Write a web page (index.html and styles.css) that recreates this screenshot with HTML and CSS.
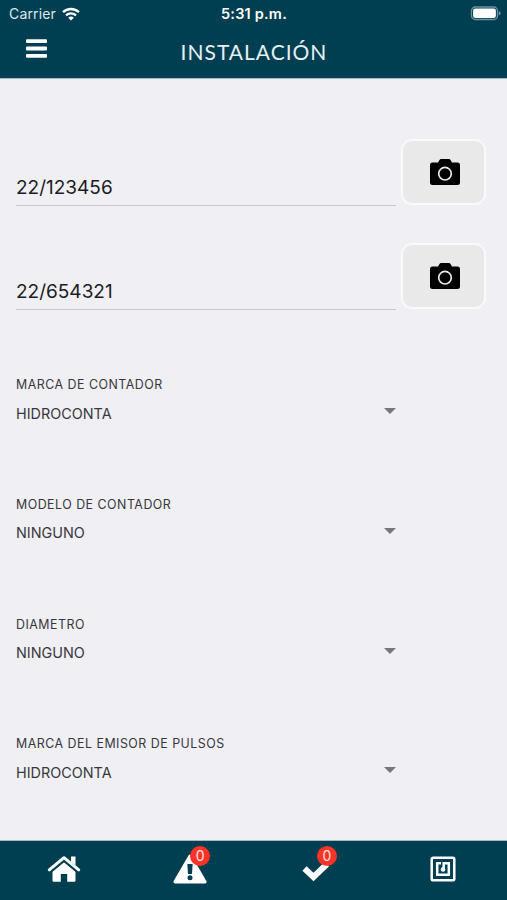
FILE: index.html
```html
<!DOCTYPE html>
<html lang="es">

<head>
    <meta charset="UTF-8">
    <meta name="viewport" content="width=device-width, initial-scale=1.0">
    <title>Instalación</title>
    <link rel="stylesheet" href="styles.css">
</head>

<body>

    <!-- Header -->
    <header class="header">
        <div class="status-bar">
            <div class="carrier">
                <span class="carrier-name">Carrier</span>
                <svg class="wifi" width="18" height="14" viewBox="0 0 18 14" fill="none" stroke="#fff" stroke-width="2.3">
                    <path d="M1 5.2a11.6 11.6 0 0 1 16 0" />
                    <path d="M4 8.3a7.2 7.2 0 0 1 10 0" />
                    <path d="M9 13.6L6.2 10.8a4 4 0 0 1 5.6 0z" fill="#fff" stroke="none" />
                </svg>
            </div>
            <span class="time">5:31 p.m.</span>
            <svg class="battery" width="31" height="15" viewBox="0 0 31 15">
                <rect x="1.5" y="1" width="26" height="12.5" rx="3.8" fill="none" stroke="#6d929f" stroke-width="1.3" />
                <rect x="3.1" y="2.6" width="22.8" height="9.3" rx="2.2" fill="#fff" />
                <path d="M28.8 5.2q2 .6 2 2.1t-2 2.1z" fill="#6d929f" />
            </svg>
        </div>
        <div class="title-bar">
            <button class="menu-btn" aria-label="Menú">
                <svg width="21" height="20" viewBox="0 0 21 20" fill="#fff">
                    <rect y="0.3" width="21" height="3.8" rx="1" />
                    <rect y="7.6" width="21" height="3.8" rx="1" />
                    <rect y="14.9" width="21" height="3.8" rx="1" />
                </svg>
            </button>
            <h1>INSTALACIÓN</h1>
        </div>
    </header>

    <!-- Form -->
    <main class="content">
        <div class="photo-row">
            <div class="text-input">22/123456</div>
            <button class="photo-btn" aria-label="Foto">
                <svg width="30" height="26" viewBox="0 0 30 26">
                    <path d="M2.5 3.6H8L9.5 1Q10 0 11 0h8q1 0 1.5 1L22 3.6h5.5Q30 3.6 30 6.1v17.4Q30 26 27.5 26h-25Q0 26 0 23.5V6.1Q0 3.6 2.5 3.6z" />
                    <circle cx="15" cy="14.7" r="6.3" fill="none" stroke="#e9e9e9" stroke-width="1.7" />
                </svg>
            </button>
        </div>
        <div class="photo-row">
            <div class="text-input">22/654321</div>
            <button class="photo-btn" aria-label="Foto">
                <svg width="30" height="26" viewBox="0 0 30 26">
                    <path d="M2.5 3.6H8L9.5 1Q10 0 11 0h8q1 0 1.5 1L22 3.6h5.5Q30 3.6 30 6.1v17.4Q30 26 27.5 26h-25Q0 26 0 23.5V6.1Q0 3.6 2.5 3.6z" />
                    <circle cx="15" cy="14.7" r="6.3" fill="none" stroke="#e9e9e9" stroke-width="1.7" />
                </svg>
            </button>
        </div>

        <div class="select-list">
            <div class="select-field">
                <div class="label">MARCA DE CONTADOR</div>
                <div class="value">HIDROCONTA<span class="arrow"></span></div>
            </div>
            <div class="select-field">
                <div class="label">MODELO DE CONTADOR</div>
                <div class="value">NINGUNO<span class="arrow"></span></div>
            </div>
            <div class="select-field">
                <div class="label">DIAMETRO</div>
                <div class="value">NINGUNO<span class="arrow"></span></div>
            </div>
            <div class="select-field">
                <div class="label">MARCA DEL EMISOR DE PULSOS</div>
                <div class="value">HIDROCONTA<span class="arrow"></span></div>
            </div>
        </div>
    </main>

    <!-- Bottom tabs -->
    <nav class="tabs">
        <div class="tab">
            <svg width="34" height="28" viewBox="0 0 34 28" fill="#fff">
                <path d="M17 7.2L5.5 16.7V25.5q0 1.3 1.3 1.3h7V19h6.4v7.8h7q1.3 0 1.3-1.3V16.7z" />
                <path d="M4 16.9L17 6.2l13 10.7" fill="none" stroke="#003f51" stroke-width="1.2" />
                <path d="M2.3 14.9L17 2.7l14.7 12.2" fill="none" stroke="#fff" stroke-width="3" stroke-linecap="round" stroke-linejoin="round" />
                <path d="M24 1.5h4.5v9l-4.5-4z" />
            </svg>
        </div>
        <div class="tab">
            <div class="tab-icon">
                <svg width="34" height="30" viewBox="0 0 34 30">
                    <path d="M17 2.5L31.8 27.8H2.2z" fill="#fff" stroke="#fff" stroke-width="3.6" stroke-linejoin="round" />
                    <path d="M14.4 10h5.2l-.6 10h-4z" fill="#003f51" />
                    <circle cx="17" cy="23.8" r="2.5" fill="#003f51" />
                </svg>
                <span class="badge">0</span>
            </div>
        </div>
        <div class="tab">
            <div class="tab-icon">
                <svg width="34" height="30" viewBox="0 0 34 30">
                    <path d="M4.500 14.500l9 8.500L27 10" fill="none" stroke="#fff" stroke-width="6" />
                </svg>
                <span class="badge">0</span>
            </div>
        </div>
        <div class="tab">
            <svg width="26" height="26" viewBox="0 0 26 26" fill="none" stroke="#fff" stroke-width="2.5">
                <rect x="1.7" y="1.7" width="22.6" height="22.6" rx="1.6" />
                <path d="M11 7.2H7.2v11.6h11.6V7.2h-5.1v5.3" />
                <circle cx="13" cy="13.5" r="2.3" fill="#fff" stroke="none" />
            </svg>
        </div>
    </nav>

</body>

</html>
```
FILE: styles.css
```css
body {
    font-family: Inter, "Liberation Sans", sans-serif;
    background-color: #efeff4;
    margin: 0;
    height: 900px;
    display: flex;
    flex-direction: column;
    overflow: hidden;
}

button {
    border: none;
    padding: 0;
    background: none;
}

svg {
    display: block;
}

/* Header */
.header {
    height: 78px;
    background-color: #003f51;
    color: white;
    border-bottom: 1px solid #a5b8c1;
    flex-shrink: 0;
}

.status-bar {
    display: grid;
    grid-template-columns: 1fr auto 1fr;
    align-items: center;
    height: 27px;
    padding: 0 6px 0 9px;
}

.carrier {
    display: flex;
    align-items: center;
    gap: 6px;
    font-size: 14px;
    color: #dce7ea;
}

.carrier-name {
    letter-spacing: 0.15px;
}

.time {
    font-size: 14.5px;
    font-weight: 600;
    letter-spacing: 0.2px;
    margin-right: 2px;
}

.battery {
    justify-self: end;
}

.title-bar {
    display: grid;
    grid-template-columns: 1fr auto 1fr;
    height: 51px;
    padding: 0 25px 0 26px;
}

.menu-btn {
    justify-self: start;
    align-self: start;
    margin-top: 12px;
}

h1 {
    margin: 12px 0 0;
    font-family: Lato, sans-serif;
    font-size: 21px;
    line-height: 26px;
    font-weight: 400;
    letter-spacing: 1px;
    color: #e6eff1;
}

/* Form */
.content {
    flex: 1;
    min-height: 0;
    overflow: hidden;
    padding: 60px 21px 0 16px;
    box-sizing: border-box;
}

.photo-row {
    display: flex;
    gap: 5px;
    height: 67px;
    margin-bottom: 37px;
}

.text-input {
    flex: 1;
    border-bottom: 1.5px solid #c8c8cc;
    font-size: 19px;
    line-height: 24px;
    padding-top: 37px;
    box-sizing: border-box;
    color: #1c1c1e;
}

.photo-btn {
    display: flex;
    align-items: center;
    justify-content: center;
    width: 85px;
    height: 66px;
    padding-left: 3px;
    box-sizing: border-box;
    background-color: #e9e9e9;
    border: 2px solid #f9f9fb;
    border-radius: 11px;
}

.select-list {
    padding-top: 30.2px;
}

.select-field {
    width: 380px;
    height: 46px;
    margin-bottom: 73.7px;
    color: #38383c;
}

.label {
    font-size: 12.4px;
    line-height: 16px;
    letter-spacing: 0.5px;
}

.value {
    display: flex;
    justify-content: space-between;
    margin-top: 10.4px;
    font-size: 14.4px;
    line-height: 20px;
}

.arrow {
    border-left: 6px solid transparent;
    border-right: 6px solid transparent;
    border-top: 6px solid #77777a;
    height: 0;
    margin-top: 4.6px;
}

/* Bottom tabs */
.tabs {
    display: grid;
    grid-template-columns: repeat(4, 1fr);
    height: 59px;
    flex-shrink: 0;
    background-color: #003f51;
    border-top: 1px solid #a5b8c1;
}

.tab {
    display: flex;
    align-items: center;
    justify-content: center;
    padding-bottom: 4px;
}

.tab:first-child {
    padding-left: 2px;
}

.tab:last-child {
    padding-right: 1px;
}

.tab-icon {
    position: relative;
}

.badge {
    position: absolute;
    top: -8px;
    right: -3px;
    width: 20px;
    height: 20px;
    border-radius: 50%;
    background-color: #fb3427;
    color: #ffe3e0;
    font-size: 14px;
    line-height: 20px;
    text-align: center;
}
```
